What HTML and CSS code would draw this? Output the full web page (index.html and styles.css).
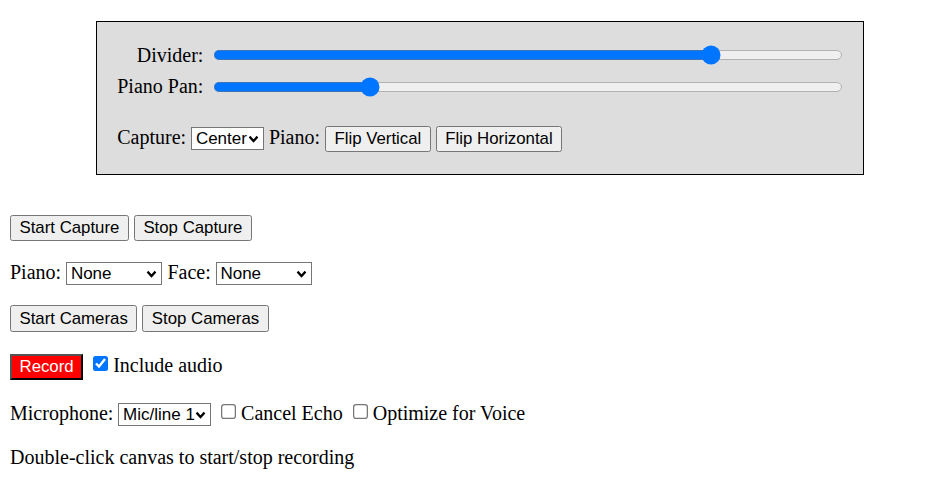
FILE: index.html
```html
<!DOCTYPE html>
<html>
<head>
<meta charset="utf-8">
<link rel="stylesheet" href="styles.css">
</head>
<body>
<div class="panel">
  <div class="sliders">
    <label class="lbl">Divider:</label>
    <input class="range" type="range" min="0" max="100" value="80">
    <label class="lbl">Piano Pan:</label>
    <input class="range" type="range" min="0" max="100" value="24">
  </div>
  <p class="panel-row">Capture: <select class="sel"><option>Center</option></select> Piano: <button class="btn">Flip Vertical</button> <button class="btn">Flip Horizontal</button></p>
</div>
<p class="row first"><button class="btn">Start Capture</button> <button class="btn">Stop Capture</button></p>
<p class="row">Piano: <select class="sel wide"><option>None</option></select> Face: <select class="sel wide"><option>None</option></select></p>
<p class="row"><button class="btn">Start Cameras</button> <button class="btn">Stop Cameras</button></p>
<p class="row"><button class="btn record">Record</button> <label><input type="checkbox" checked>Include audio</label></p>
<p class="row">Microphone: <select class="sel"><option>Mic/line 1</option></select> <label><input type="checkbox">Cancel Echo</label> <label><input type="checkbox">Optimize for Voice</label></p>
<p class="row">Double-click canvas to start/stop recording</p>
</body>
</html>
```
FILE: styles.css
```css
html {
  zoom: 1.25;
}
body {
  margin: 8px;
  font-family: "Liberation Serif", serif;
  font-size: 16px;
  color: #000;
  background: #fff;
}
.panel {
  margin: 9px 0 0 69px;
  width: 614px;
  box-sizing: border-box;
  border: 1px solid #000;
  background: #ddd;
  padding: 17px 16px 0 16px;
}
.sliders {
  display: grid;
  grid-template-columns: auto 1fr;
  column-gap: 8px;
  row-gap: 7px;
  align-items: center;
}
.lbl { text-align: right; }
.range { margin: 0; width: 100%; }
.panel-row { margin: 22px 0 17px 0; }
.btn {
  font-family: "Liberation Sans", Arial, sans-serif;
  font-size: 13.45px;
}
.sel {
  appearance: none;
  -webkit-appearance: none;
  font-family: "Liberation Sans", Arial, sans-serif;
  font-size: 13.6px;
  color: #000;
  padding: 1px 12px 1px 3px;
  border: 1px solid #767676;
  border-radius: 0;
  background-color: #fff;
  background-image: url("data:image/svg+xml,%3Csvg xmlns='http://www.w3.org/2000/svg' viewBox='0 0 10 7'%3E%3Cpolyline points='1.2,1.5 5,5.3 8.8,1.5' fill='none' stroke='%23000' stroke-width='2.2'/%3E%3C/svg%3E");
  background-repeat: no-repeat;
  background-size: 9px 6px;
  background-position: right 3px center;
}
.wide { width: 77px; }
.record {
  background: #f00;
  color: #fff;
}
.row { margin: 16px 0; }
.first { margin-top: 32px; }
```
